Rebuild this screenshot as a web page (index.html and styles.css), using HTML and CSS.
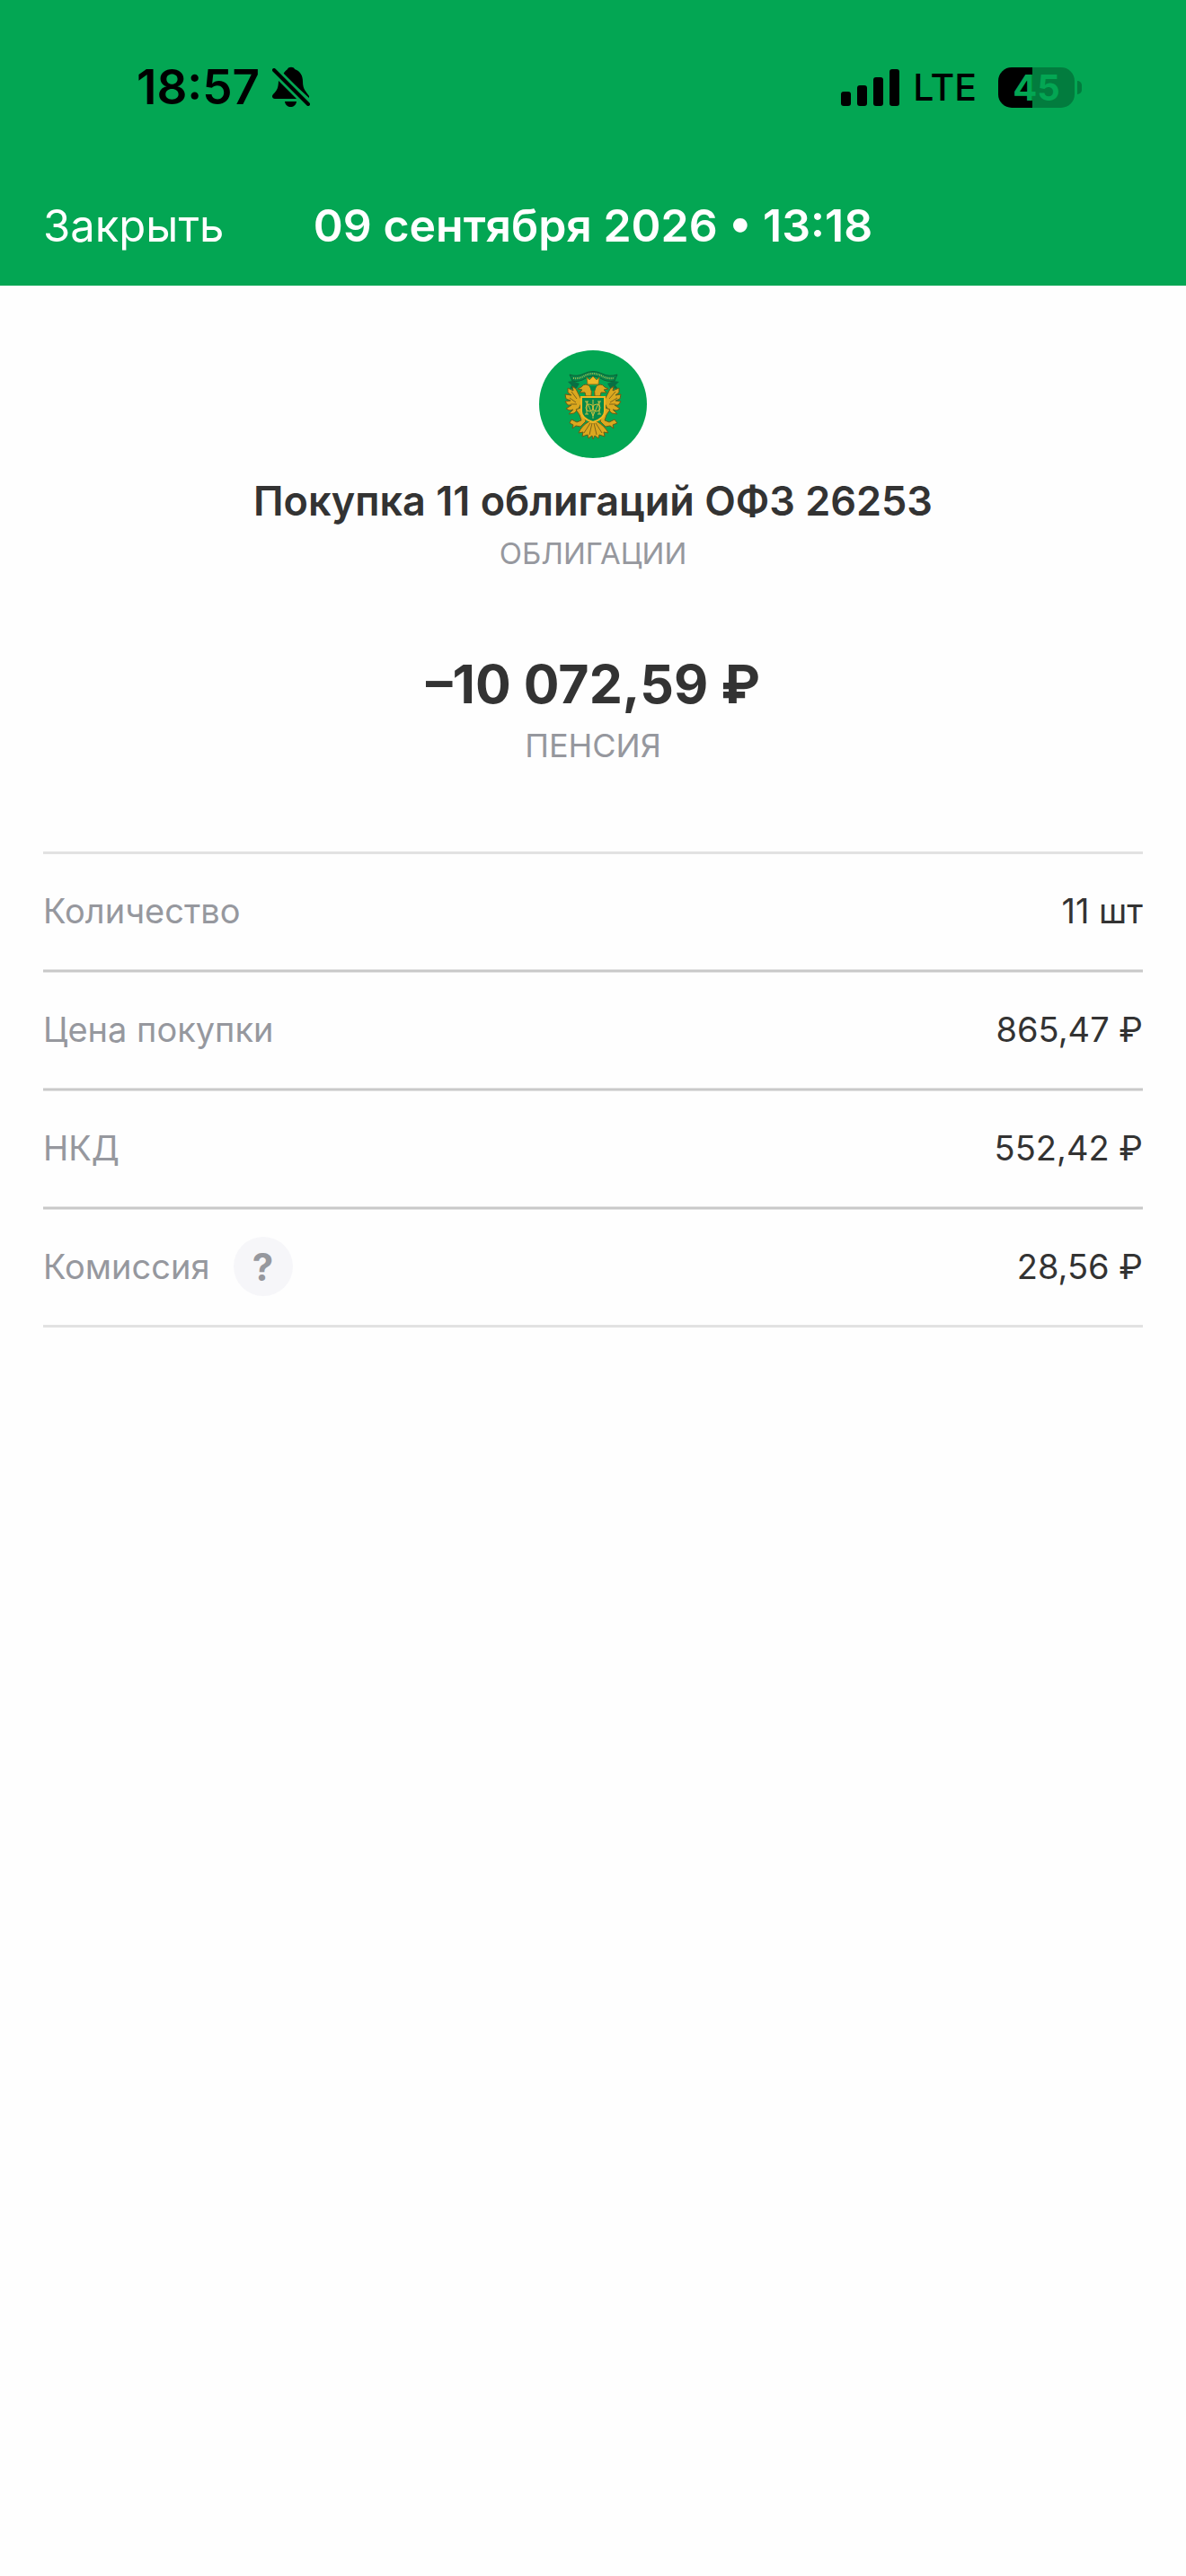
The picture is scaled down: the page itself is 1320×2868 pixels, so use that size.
FILE: index.html
```html
<!DOCTYPE html>
<html lang="ru">
<head>
    <meta charset="UTF-8">
    <meta name="viewport" content="width=device-width, initial-scale=1.0">
    <title>Покупка 11 облигаций ОФЗ 26253</title>
    <link rel="stylesheet" href="styles.css">
</head>
<body>
    <header class="header">
        <div class="status-bar">
            <div class="status-left">
                <span class="time">18:57</span>
                <svg class="bell" viewBox="0 0 42 46" width="42" height="46" aria-hidden="true">
                    <path d="M12 9 C14 5 16 4 17 3 C18 0 24 0 25 3 C31 5 34 10 34 17 C34 26 38 28 41 33 L41 35 Z"/>
                    <path d="M7 15 L28 36 L3 36 C0 36 -1 33 1 31 C5 27 7 24 7 15 Z"/>
                    <path d="M14 39 H27 C26 47 15 47 14 39 Z"/>
                    <path class="bell-slash" d="M2 4 L40 42"/>
                </svg>
            </div>
            <div class="status-right">
                <svg class="signal" viewBox="0 0 65 41" width="65" height="41" aria-hidden="true">
                    <rect x="0" y="25" width="11" height="16" rx="3"/>
                    <rect x="18" y="18" width="11" height="23" rx="3"/>
                    <rect x="36" y="9" width="11" height="32" rx="3"/>
                    <rect x="54" y="0" width="11" height="41" rx="3"/>
                </svg>
                <span class="network">LTE</span>
                <div class="battery">
                    <span class="battery-body">45</span>
                    <span class="battery-cap"></span>
                </div>
            </div>
        </div>
        <nav class="nav">
            <button class="close" type="button">Закрыть</button>
            <h1 class="nav-title">09 сентября 2026 • 13:18</h1>
        </nav>
    </header>
    <main class="content">
        <svg class="logo" viewBox="0 0 120 120" width="120" height="120" aria-hidden="true">
            <circle cx="60" cy="60" r="60" fill="#03a753"/>
            <!-- ribbon -->
            <path d="M37 34 L32 35 L36 39 L34 43 L42 42 L45 37 Z M83 34 L89 35 L85 39 L88 43 L79 42 L76 37 Z" fill="#087043"/>
            <path d="M34 27 Q42 30 50 26 Q60 21 70 26 Q78 30 87 27 L84 34 Q76 36 68 31 Q60 27 52 31 Q44 36 37 34 Z" fill="#07864a" stroke="#0c6338" stroke-width="1"/>
            <path d="M38 31 Q45 32 51 28 Q60 24 69 28 Q75 32 83 31" fill="none" stroke="#9cba54" stroke-width="2" stroke-dasharray="1 1"/>
            <!-- wings -->
            <g fill="#dba81f" stroke="#685d18" stroke-width="1">
                <path d="M46 53 L41 43 L37 40 L38 45 L32 42 L32 47 L36 50 L29 49 L30 54 L35 56 L29 57 L32 61 L36 61 L30 65 L34 67 L38 66 L33 71 L39 70 L44 65 L48 57 Z"/>
                <path d="M74 53 L79 43 L83 40 L82 45 L89 42 L89 47 L85 50 L91 49 L90 54 L85 56 L91 57 L88 61 L84 61 L90 65 L86 67 L82 66 L87 71 L81 70 L76 65 L72 57 Z"/>
                <!-- legs -->
                <path d="M41 66 L45 72 L47 78 L42 80 L36 77 L34 81 L38 83 L37 87 L41 84 L46 85 L52 79 L49 70 L46 64 Z"/>
                <path d="M79 66 L75 72 L73 78 L78 80 L84 77 L87 81 L82 83 L83 87 L79 84 L74 85 L68 79 L71 70 L74 64 Z"/>
                <!-- heads -->
                <path d="M58 51 Q60 39 52 38 Q49 38 47 41 L43 43 L48 44 L45 47 L51 47 L52 51 Z"/>
                <path d="M62 51 Q60 39 68 38 Q71 38 73 41 L77 43 L72 44 L75 47 L69 47 L68 51 Z"/>
                <!-- tail -->
                <path d="M56 79 Q47 84 44 92 L49 91 L48 96 L54 94 L55 98 L59 95 L60 99 L62 95 L66 98 L67 94 L73 96 L72 91 L77 92 Q73 84 64 79 Z"/>
            </g>
            <path d="M36 46 L42 54 M34 53 L41 58 M35 60 L42 60 M85 46 L78 54 M87 53 L79 58 M85 60 L78 60 M57 81 L50 92 M59 81 L56 94 M61 81 L64 94 M63 81 L70 92" fill="none" stroke="#80661a" stroke-width="1"/>
            <path d="M53 30 L56 33 L60 29 L64 33 L67 30 L66 38 H54 Z" fill="#edb927" stroke="#8a7719" stroke-width="1"/>
            <path d="M56 40 H64 L62 45 H58 Z" fill="#078948"/>
            <!-- shield -->
            <path d="M47 52 H73 V68 Q73 76 60 80 Q47 76 47 68 Z" fill="#078948" stroke="#efb724" stroke-width="2"/>
            <path d="M53 57 V71 M67 57 V71 M53 57 L60 73 L67 57 M60 55 V76 M51 57 H55 M65 57 H69 M51 71 H55 M65 71 H69" fill="none" stroke="#c9c044" stroke-width="1"/>
            <circle cx="56" cy="64" r="4" fill="none" stroke="#d1bd39" stroke-width="1"/>
            <circle cx="64" cy="64" r="4" fill="none" stroke="#d1bd39" stroke-width="1"/>
        </svg>
        <h2 class="title">Покупка 11 облигаций ОФЗ 26253</h2>
        <p class="category">ОБЛИГАЦИИ</p>
        <p class="amount">–10 072,59 ₽</p>
        <p class="account">ПЕНСИЯ</p>
        <dl class="details">
            <div class="row">
                <dt>Количество</dt>
                <dd>11 шт</dd>
            </div>
            <div class="row">
                <dt>Цена покупки</dt>
                <dd>865,47 ₽</dd>
            </div>
            <div class="row">
                <dt>НКД</dt>
                <dd>552,42 ₽</dd>
            </div>
            <div class="row">
                <dt>Комиссия <button class="help" type="button" aria-label="О комиссии">?</button></dt>
                <dd>28,56 ₽</dd>
            </div>
        </dl>
    </main>
</body>
</html>
```
FILE: styles.css
```css
* {
    box-sizing: border-box;
}

body {
    margin: 0;
    font-family: Inter, "Liberation Sans", sans-serif;
    background-color: #fefefe;
    color: #333;
}

h1, h2, p, dl, dd {
    margin: 0;
}

button {
    padding: 0;
    border: none;
    font-family: inherit;
    cursor: pointer;
}

.header {
    background-color: #03a653;
}

.status-bar {
    display: flex;
    justify-content: space-between;
    height: 186px;
    padding: 66px 116px 58px 152px;
    color: #000;
}

.status-left, .status-right {
    display: flex;
    align-items: center;
}

.status-left {
    gap: 14px;
}

.time {
    font-size: 53px;
    font-weight: 600;
}

.bell-slash {
    fill: none;
    stroke: #000;
    stroke-width: 4px;
    stroke-linecap: round;
    filter: drop-shadow(2px -2px 0 #03a653) drop-shadow(-2px 2px 0 #03a653);
}

.network {
    margin: 0 24px 0 15px;
    font-size: 41px;
    font-weight: 500;
}

.battery {
    display: flex;
    align-items: center;
    gap: 3px;
}

.battery-body {
    width: 85px;
    height: 45px;
    border-radius: 15px;
    background: linear-gradient(to right, #000 45%, #027c3e 45%);
    color: #03a653;
    font-size: 40px;
    font-weight: 700;
    line-height: 45px;
    text-align: center;
}

.battery-cap {
    width: 5px;
    height: 15px;
    border-radius: 0 5px 5px 0;
    background-color: #027c3e;
}

.nav {
    display: grid;
    grid-template-columns: 1fr auto 1fr;
    align-items: center;
    height: 132px;
    padding: 0 48px 2px;
    color: #fff;
}

.close {
    justify-self: start;
    background: none;
    color: inherit;
    font-size: 49px;
}

.nav-title {
    font-size: 50px;
    font-weight: 600;
}

.content {
    padding: 72px 48px;
    text-align: center;
}

.logo {
    display: block;
    margin: 0 auto;
}

.title {
    margin-top: 20px;
    font-size: 45px;
    font-weight: 600;
    line-height: 56px;
}

.category, .account {
    color: #96989e;
    line-height: 44px;
}

.category {
    margin-top: 8px;
    font-size: 33px;
}

.amount {
    margin-top: 88px;
    font-size: 59px;
    font-weight: 700;
    line-height: 72px;
}

.account {
    margin-top: 10px;
    font-size: 36px;
}

.details {
    margin-top: 96px;
    font-size: 38px;
}

.row {
    display: flex;
    justify-content: space-between;
    align-items: center;
    height: 134px;
    padding-bottom: 2px;
    border-top: 3px solid rgba(0, 0, 0, 0.11);
    border-bottom: 3px solid rgba(0, 0, 0, 0.11);
}

.row + .row {
    margin-top: -2px;
}

.row dt {
    display: flex;
    align-items: center;
    gap: 26px;
    color: #96989e;
}

.help {
    width: 66px;
    height: 66px;
    border-radius: 50%;
    background-color: #f6f6f9;
    color: #96989e;
    font-size: 42px;
    font-weight: 700;
}
```
